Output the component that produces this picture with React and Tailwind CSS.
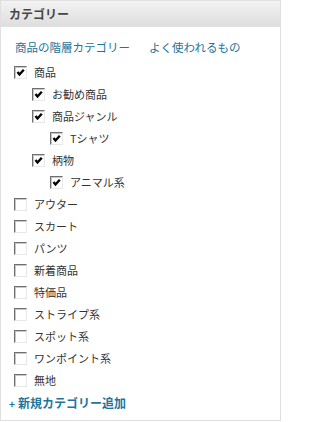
import React from "react";

const items = [
  { label: "商品", level: 0, checked: true },
  { label: "お勧め商品", level: 1, checked: true },
  { label: "商品ジャンル", level: 1, checked: true },
  { label: "Tシャツ", level: 2, checked: true },
  { label: "柄物", level: 1, checked: true },
  { label: "アニマル系", level: 2, checked: true },
  { label: "アウター", level: 0 },
  { label: "スカート", level: 0 },
  { label: "パンツ", level: 0 },
  { label: "新着商品", level: 0 },
  { label: "特価品", level: 0 },
  { label: "ストライプ系", level: 0 },
  { label: "スポット系", level: 0 },
  { label: "ワンポイント系", level: 0 },
  { label: "無地", level: 0 },
];

const indent = ["pl-[13px]", "pl-[31px]", "pl-[49px]"];

const Box = ({ checked }) => (
  <span className="relative w-[13px] h-[13px] shrink-0 border border-t-[#6f6f6f] border-l-[#6f6f6f] border-b-[#e8e8e8] border-r-[#e8e8e8] bg-white shadow-[inset_1px_1px_0_#c8c8c8]">
    {checked && (
      <svg viewBox="0 0 11 11" className="absolute inset-0 w-[11px] h-[11px]">
        <path d="M2.5 5 L4.5 7.5 L8.8 2.8" fill="none" stroke="#000" strokeWidth="2.4" />
      </svg>
    )}
  </span>
);

export default function App() {
  return (
    <div className="w-[281px] h-[421px] border border-[#dfdfdf] bg-white font-['Noto_Sans_CJK_JP','Noto_Sans',sans-serif] text-[11px] text-[#333]">
      <div className="h-[26px] flex items-center px-[8px] bg-gradient-to-b from-[#f3f3f3] to-[#dedede] border-b border-[#dfdfdf] text-[#464646] font-bold text-[12px]">
        カテゴリー
      </div>
      <div className="flex gap-[19px] pl-[14px] pt-[10px] text-[#21759b] text-[11.5px] leading-[20px]">
        <span>商品の階層カテゴリー</span>
        <span>よく使われるもの</span>
      </div>
      <ul className="pt-[4px]">
        {items.map((it) => (
          <li
            key={it.label}
            className={`h-[22px] flex items-center gap-[7px] ${indent[it.level]}`}
          >
            <Box checked={it.checked} />
            <span className="leading-[22px]">{it.label}</span>
          </li>
        ))}
      </ul>
      <div className="pl-[8px] pt-[2px] font-bold text-[#21759b] text-[12px] leading-[20px]">
        <span className="text-[10px] mr-[3px]">+</span>新規カテゴリー追加
      </div>
    </div>
  );
}
